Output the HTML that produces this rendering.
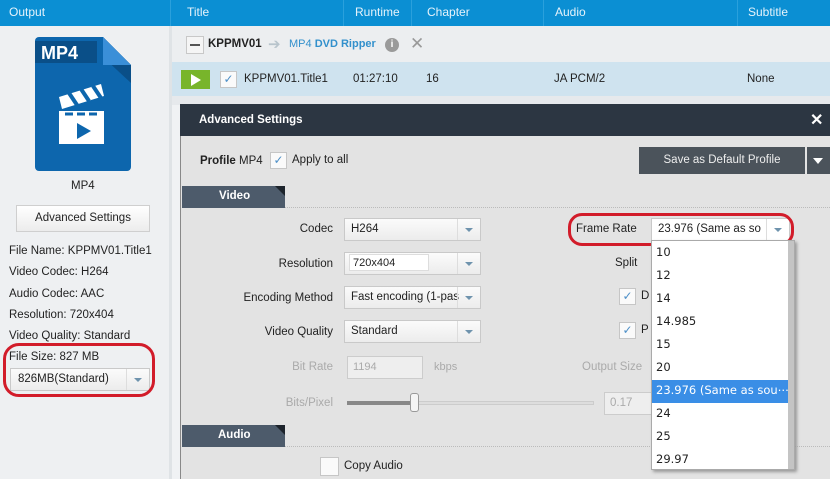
<!DOCTYPE html>
<html><head><meta charset="utf-8"><style>
*{box-sizing:border-box;margin:0;padding:0}
body{width:830px;height:479px;overflow:hidden;position:relative;font-family:"Liberation Sans",Arial,sans-serif;font-size:11.5px;color:#222;background:#f0f2f4}
.a{position:absolute;white-space:nowrap}
.hdr{left:0;top:0;width:830px;height:26px;background:#0b8fd3;color:#e6f3fb;font-size:12px}
.hdr span{position:absolute;top:5px}
.sel{position:absolute;height:23px;background:linear-gradient(#fbfbfb,#ececec);border:1px solid #c9c9c9;font-size:11.5px;padding:4px 6px;color:#222}
.sel:after{content:"";position:absolute;right:0;top:0;width:22px;height:100%;border-left:1px solid #ddd}
.sel i{position:absolute;right:7px;top:9px;border:4px solid transparent;border-top:4px solid #6f93ad;border-bottom:0;z-index:2}
.lbl{position:absolute;text-align:right;width:170px;font-size:11.5px}
.chk{position:absolute;width:17px;height:17px;border:1px solid #c6c6c6;background:#fafafa;color:#4d8fc7;font-size:12px;text-align:center;line-height:15px}
.dd div{height:23px;padding:3px 4px;font-family:"DejaVu Sans",sans-serif;font-size:11.5px}
</style></head><body>
<div class="a hdr"><span style="left:9px">Output</span><span style="left:187px">Title</span><span style="left:355px">Runtime</span><span style="left:427px">Chapter</span><span style="left:555px">Audio</span><span style="left:748px">Subtitle</span>
<div style="position:absolute;left:170px;top:0;width:1px;height:26px;background:#2aa0dc"></div>
<div style="position:absolute;left:343px;top:0;width:1px;height:26px;background:#2aa0dc"></div>
<div style="position:absolute;left:411px;top:0;width:1px;height:26px;background:#2aa0dc"></div>
<div style="position:absolute;left:543px;top:0;width:1px;height:26px;background:#2aa0dc"></div>
<div style="position:absolute;left:737px;top:0;width:1px;height:26px;background:#2aa0dc"></div>
</div>
<div class="a" style="left:0;top:26px;width:169px;height:453px;background:#eef0f2"></div>
<div class="a" style="left:169px;top:26px;width:3px;height:453px;background:#dfe3e6"></div>
<svg class="a" style="left:35px;top:37px" width="97" height="134" viewBox="0 0 97 134">
<path d="M4 0H68L96 28V130a4 4 0 0 1-4 4H4a4 4 0 0 1-4-4V4a4 4 0 0 1 4-4z" fill="#0d66ad"/>
<path d="M68 0L96 28V46L68 20z" fill="#0a4f88"/>
<path d="M68 0V28H96z" fill="#3a8fd8"/>
<rect x="0" y="4" width="62" height="22" fill="#0a4f88"/>
<text x="6" y="22" font-family="Liberation Sans" font-weight="bold" font-size="18" fill="#fff">MP4</text>
<path d="M24 60l42-13 3 12-42 13z" fill="#fff"/>
<path d="M34 56l8 12M46 52l8 12M58 49l8 12" stroke="#0d66ad" stroke-width="4"/>
<rect x="24" y="74" width="45" height="33" fill="#fff"/>
<path d="M30 77h8M42 77h8M54 77h8" stroke="#0d66ad" stroke-width="3"/>
<path d="M42 86l14 8-14 8z" fill="#0d66ad"/>
</svg>
<div class="a" style="left:71px;top:180px">MP4</div>
<div class="a" style="left:16px;top:205px;width:134px;height:27px;border:1px solid #cfcfcf;background:linear-gradient(#fff,#ececec);text-align:center;line-height:25px">Advanced Settings</div>
<div class="a" style="left:9px;top:241px;line-height:21.3px">File Name: KPPMV01.Title1<br>Video Codec: H264<br>Audio Codec: AAC<br>Resolution: 720x404<br>Video Quality: Standard<br>File Size: 827 MB</div>
<div class="sel" style="left:10px;top:368px;width:140px;padding-left:7px">826MB(Standard)<i></i></div>
<div class="a" style="left:3px;top:343px;width:152px;height:54px;border:3px solid #d21c2a;border-radius:16px"></div>
<div class="a" style="left:172px;top:26px;width:658px;height:36px;background:#eceef0"></div>
<div class="a" style="left:186px;top:36px;width:18px;height:18px;border:1px solid #c8c8c8;background:#f5f5f5"><div style="margin:7px 3px;height:2px;background:#555"></div></div>
<div class="a" style="left:208px;top:38px;font-weight:bold">KPPMV01</div>
<div class="a" style="left:268px;top:35px;color:#b8c4cc;font-size:15px">➔</div>
<div class="a" style="left:289px;top:38px;color:#3290cc;font-size:11px">MP4 <b>DVD Ripper</b></div>
<div class="a" style="left:385px;top:38px;width:14px;height:14px;border-radius:50%;background:#9a9a9a;color:#fff;font-size:10px;text-align:center;line-height:14px;font-weight:bold">i</div>
<div class="a" style="left:410px;top:34px;color:#999;font-size:17px">✕</div>
<div class="a" style="left:172px;top:62px;width:658px;height:34px;background:#cfe3ef"></div>
<div class="a" style="left:181px;top:70px;width:29px;height:19px;background:#78b52b"><div style="margin:4px 10px;border-left:10px solid #fff;border-top:6px solid transparent;border-bottom:6px solid transparent;width:0"></div></div>
<div class="chk" style="left:220px;top:71px">✓</div>
<div class="a" style="left:244px;top:73px">KPPMV01.Title1</div>
<div class="a" style="left:353px;top:73px">01:27:10</div>
<div class="a" style="left:426px;top:73px">16</div>
<div class="a" style="left:554px;top:73px">JA PCM/2</div>
<div class="a" style="left:747px;top:73px">None</div>
<div class="a" style="left:172px;top:96px;width:658px;height:9px;background:#e6e9ec"></div>
<div class="a" style="left:180px;top:104px;width:650px;height:375px;background:#e3e3e3;border-left:1px solid #888"></div>
<div class="a" style="left:180px;top:104px;width:650px;height:32px;background:#2c3642;color:#fff;font-weight:bold;padding:10px 19px">Advanced Settings</div>
<div class="a" style="left:810px;top:110px;color:#fff;font-size:16px;font-weight:bold">✕</div>
<div class="a" style="left:200px;top:155px"><b>Profile</b> MP4</div>
<div class="chk" style="left:270px;top:152px">✓</div>
<div class="a" style="left:292px;top:154px">Apply to all</div>
<div class="a" style="left:639px;top:147px;width:166px;height:27px;background:#4b535b;color:#eee;text-align:center;line-height:27px">Save as Default Profile</div>
<div class="a" style="left:807px;top:147px;width:23px;height:27px;background:#4b535b"><div style="margin:11px 6px;border-top:6px solid #fff;border-left:5px solid transparent;border-right:5px solid transparent;width:0"></div></div>
<div class="a" style="left:182px;top:186px;width:103px;height:22px;background:#4d5b6b;color:#fff;font-weight:bold;padding:4px 37px">Video</div>
<div class="a" style="left:275px;top:186px;border-top:10px solid #1d242c;border-left:10px solid transparent"></div>
<div class="a" style="left:285px;top:207px;width:545px;border-top:1px dotted #bbb"></div>
<div class="lbl" style="left:163px;top:223px">Codec</div>
<div class="sel" style="left:344px;top:218px;width:137px">H264<i></i></div>
<div class="lbl" style="left:163px;top:258px">Resolution</div>
<div class="sel" style="left:344px;top:252px;width:137px;font-size:11px"><span style="display:inline-block;width:80px;height:17px;border:1px solid #ddd;background:#fff;margin:-3px 0 0 -2px;padding:2px 3px">720x404</span><i></i></div>
<div class="lbl" style="left:163px;top:292px">Encoding Method</div>
<div class="sel" style="left:344px;top:286px;width:137px">Fast encoding (1-pas<i></i></div>
<div class="lbl" style="left:163px;top:326px">Video Quality</div>
<div class="sel" style="left:344px;top:320px;width:137px">Standard<i></i></div>
<div class="lbl" style="left:163px;top:361px;color:#aaa">Bit Rate</div>
<div class="a" style="left:347px;top:356px;width:76px;height:23px;border:1px solid #ccc;background:#eee;color:#aaa;font-size:11px;padding:4px 5px">1194</div>
<div class="a" style="left:434px;top:361px;color:#aaa;font-size:11px">kbps</div>
<div class="lbl" style="left:163px;top:397px;color:#aaa">Bits/Pixel</div>
<div class="a" style="left:347px;top:401px;width:247px;height:4px;background:#ddd;border:1px solid #ccc"></div>
<div class="a" style="left:347px;top:401px;width:66px;height:4px;background:#888"></div>
<div class="a" style="left:410px;top:393px;width:9px;height:19px;border:1px solid #999;border-radius:3px;background:#f5f5f5"></div>
<div class="a" style="left:604px;top:392px;width:50px;height:23px;border:1px solid #ccc;background:#eee;color:#aaa;padding:4px 5px">0.17</div>
<div class="a" style="left:615px;top:257px">Split</div>
<div class="chk" style="left:619px;top:288px">✓</div><div class="a" style="left:641px;top:290px">D</div>
<div class="chk" style="left:619px;top:322px">✓</div><div class="a" style="left:641px;top:324px">P</div>
<div class="a" style="left:582px;top:361px;color:#aaa">Output Size</div>
<div class="a" style="left:182px;top:425px;width:103px;height:22px;background:#4d5b6b;color:#fff;font-weight:bold;padding:4px 36px">Audio</div>
<div class="a" style="left:275px;top:425px;border-top:10px solid #1d242c;border-left:10px solid transparent"></div>
<div class="a" style="left:285px;top:446px;width:545px;border-top:1px dotted #bbb"></div>
<div class="chk" style="left:320px;top:457px;width:19px;height:19px"></div>
<div class="a" style="left:344px;top:460px">Copy Audio</div>
<div class="a" style="left:576px;top:223px">Frame Rate</div>
<div class="sel" style="left:651px;top:218px;width:139px;background:#fff">23.976 (Same as so<i></i></div>
<div class="a" style="left:568px;top:213px;width:226px;height:33px;border:3px solid #d21c2a;border-radius:14px"></div>
<div class="a dd" style="left:651px;top:240px;width:144px;height:230px;background:#fff;border:1px solid #aaa;box-shadow:2px 2px 3px #999;padding-top:1px">
<div>10</div><div>12</div><div>14</div><div>14.985</div><div>15</div><div>20</div><div style="background:#3a8ee6;color:#fff;width:136px">23.976 (Same as sou⋯</div><div>24</div><div>25</div><div>29.97</div></div>
<div class="a" style="left:788px;top:241px;width:6px;height:228px;background:#c4c4c4"></div>
</body></html>
